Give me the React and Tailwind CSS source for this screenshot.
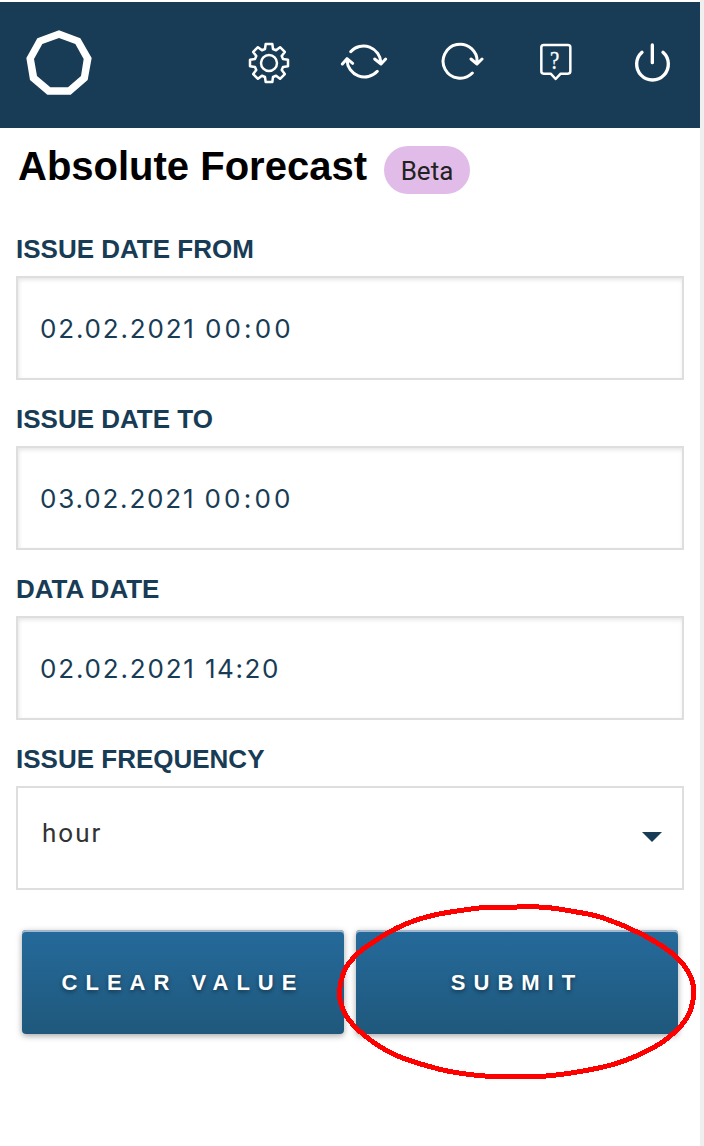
import React from "react";

const sans = "font-['Liberation_Sans',Arial,sans-serif]";

function gearPoints() {
  const tooth = [[-12, -42], [-10, -57], [10, -57], [12, -42]];
  const points = [];
  for (let i = 0; i < 8; i++) {
    const a = (i * Math.PI) / 4;
    for (const [x, y] of tooth) {
      const px = 117 + x * Math.cos(a) - y * Math.sin(a);
      const py = 99 + x * Math.sin(a) + y * Math.cos(a);
      points.push(px.toFixed(1) + "," + py.toFixed(1));
    }
  }
  return points.join(" ");
}

const outline = [
  [484, 52], [560, 51], [645, 52], [740, 66], [820, 84], [930, 130], [1020, 185],
  [1065, 230], [1085, 268], [1091, 300], [1088, 337], [1070, 385], [1030, 430],
  [975, 470], [870, 517], [760, 543], [635, 559], [480, 559], [400, 551],
  [330, 538], [215, 503], [150, 470], [90, 425], [50, 380], [33, 340],
  [28, 303], [42, 245], [65, 210], [105, 173], [205, 112], [305, 77], [430, 56],
];

// Closed Catmull-Rom curve through the given points.
function smoothPath(p) {
  const n = p.length;
  let d = `M${p[0][0]} ${p[0][1]}`;
  for (let i = 0; i < n; i++) {
    const a = p[(i - 1 + n) % n];
    const b = p[i];
    const c = p[(i + 1) % n];
    const e = p[(i + 2) % n];
    d += `C${b[0] + (c[0] - a[0]) / 6} ${b[1] + (c[1] - a[1]) / 6} ${c[0] - (e[0] - b[0]) / 6} ${c[1] - (e[1] - b[1]) / 6} ${c[0]} ${c[1]}`;
  }
  return d + "Z";
}

function Icon({ label, viewBox, children }) {
  return (
    <button type="button" aria-label={label} className="block h-[54px] w-12 shrink-0">
      <svg
        className="block h-[54px] w-12"
        viewBox={viewBox}
        fill="none"
        stroke="#fff"
        strokeWidth="9"
        strokeLinecap="round"
        strokeLinejoin="round"
      >
        {children}
      </svg>
    </button>
  );
}

function Header() {
  return (
    <header className="mt-0.5 flex h-[126px] items-center justify-between bg-[#183c55] px-6">
      <svg className="size-[72px]" viewBox="72 87 216 216" fill="#fff" fillRule="evenodd">
        <path d="M177 91L241 115L275 174L263 240L212 284H142L90 240L79 174L112 115ZM177 114L127 132L102 177L111 228L151 262H204L243 228L251 177L226 132Z" />
      </svg>
      <nav className="flex items-center gap-12">
        <Icon label="Settings" viewBox="42 24 144 162">
          <polygon points={gearPoints()} strokeWidth="7.5" />
          <circle cx="117" cy="99" r="24" strokeWidth="7.5" />
        </Icon>
        <Icon label="Sync" viewBox="330 24 144 162">
          <path d="M362 65A52.5 52.5 0 0 1 453 99M434 87L453 102L467 87" />
          <path d="M442 124A52.5 52.5 0 0 1 351 90M337 102L351 86L368 100" />
        </Icon>
        <Icon label="Refresh" viewBox="48 24 144 162">
          <path d="M157 129A51 51 0 1 1 171 99M153 87L171 102L186 87" />
        </Icon>
        <Icon label="Help" viewBox="336 24 144 162">
          <path
            strokeWidth="7.5"
            d="M371 45H444Q451 45 451 52V124Q451 131 444 131H422L407 147L392 131H371Q364 131 364 124V52Q364 45 371 45Z"
          />
          <text
            x="468"
            y="117"
            textAnchor="middle"
            fontSize="74"
            fill="#fff"
            stroke="#fff"
            strokeWidth="1"
            transform="translate(6.2 0) scale(0.85 1)"
            className="font-['Liberation_Serif',serif]"
          >
            ?
          </text>
        </Icon>
        <Icon label="Log out" viewBox="84 114 144 162">
          <path strokeWidth="10" d="M126 157A47.5 47.5 0 1 0 189 157M157 135V188" />
        </Icon>
      </nav>
    </header>
  );
}

function Field({ label, children }) {
  return (
    <div className="flex h-[170px] flex-col">
      <label className="block h-[42px] text-[26px] leading-[30px] font-bold whitespace-nowrap text-[#183c55]">
        {label}
      </label>
      {children}
    </div>
  );
}

function DateBox({ date, time, timeClass = "tracking-[3.2px]" }) {
  return (
    <div className="flex h-[104px] items-center border-2 border-[#dedede] pt-0.5 pl-[22px] shadow-[inset_1px_2px_4px_rgba(0,0,0,0.1)]">
      <span className="font-['Inter',sans-serif] text-[26px] leading-8 tracking-[1.82px] whitespace-pre text-[#183c55] [font-feature-settings:'calt'_0]">
        {date} <span className={timeClass}>{time}</span>
      </span>
    </div>
  );
}

function ActionButton({ children }) {
  return (
    <button
      type="button"
      className="h-[104px] flex-1 rounded-[4px] bg-linear-to-b from-[#256a9b] to-[#1f587c] text-center text-[22px] font-bold tracking-[8px] whitespace-nowrap text-white shadow-[0_2px_6px_rgba(0,0,0,0.35),inset_0_2px_0_#a3b8cc] [text-shadow:0_2px_4px_rgba(0,0,0,0.45)]"
    >
      {children}
    </button>
  );
}

export default function App() {
  return (
    <div className={`flex h-[1146px] w-[704px] bg-[#efefef] ${sans}`}>
      <div className="flex w-[700px] flex-col bg-white">
        <Header />
        <main className="px-4 pt-[18px]">
          <div className="flex h-[88px] items-start pl-0.5">
            <h1 className="w-[366px] text-[40px] leading-10 font-bold whitespace-nowrap text-black">
              Absolute Forecast
            </h1>
            <span className="flex h-12 w-[86px] items-center justify-center rounded-full bg-[#e2bce8] pt-0.5 font-['Roboto',sans-serif] text-[26px] leading-8 text-[#222]">
              Beta
            </span>
          </div>
          <Field label="ISSUE DATE FROM">
            <DateBox date="02.02.2021" time="00:00" />
          </Field>
          <Field label="ISSUE DATE TO">
            <DateBox date="03.02.2021" time="00:00" />
          </Field>
          <Field label="DATA DATE">
            <DateBox date="02.02.2021" time="14:20" timeClass="tracking-[1.6px]" />
          </Field>
          <Field label="ISSUE FREQUENCY">
            <div className="flex h-[104px] items-center justify-between border-2 border-[#dedede] pr-5 pl-6">
              <span className="pb-2.5 font-['Roboto',sans-serif] text-[26px] leading-8 tracking-[2px] text-[#333]">
                hour
              </span>
              <svg className="mb-[3px] h-[10px] w-5" viewBox="0 0 20 10" fill="#183c55">
                <path d="M0 0H20L10 10Z" />
              </svg>
            </div>
          </Field>
          <div className="relative mt-[16px] flex gap-3 px-1.5">
            <ActionButton>CLEAR VALUE</ActionButton>
            <ActionButton>SUBMIT</ActionButton>
            <svg
              className="pointer-events-none absolute top-[-40px] left-[314px] h-[256px] w-[374px]"
              viewBox="0 0 1122 768"
              fill="none"
              stroke="#f00"
              strokeWidth="15"
              strokeLinejoin="round"
              shapeRendering="crispEdges"
            >
              <path d={smoothPath(outline)} />
            </svg>
          </div>
        </main>
      </div>
    </div>
  );
}
